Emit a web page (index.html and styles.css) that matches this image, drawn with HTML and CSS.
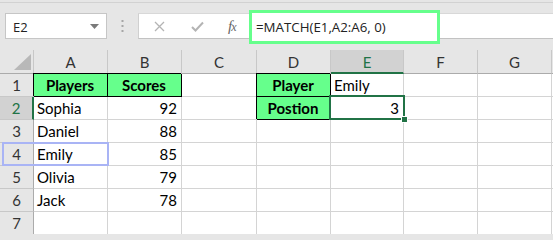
FILE: index.html
```html
<!DOCTYPE html>
<html>
<head>
<meta charset="utf-8">
<link rel="stylesheet" href="styles.css">
</head>
<body>
<div class="toolbar">
  <div class="namebox">
    <span class="nb-text">E2</span>
    <svg class="nb-arrow" width="9" height="5" viewBox="0 0 9 5"><path d="M0 0 H9 L4.5 5 Z" fill="#7a7a7a"/></svg>
  </div>
  <div class="dots">
    <svg width="3" height="12" viewBox="0 0 3 12"><rect x="0.5" y="0" width="2" height="2" fill="#a6a6a6"/><rect x="0.5" y="5" width="2" height="2" fill="#a6a6a6"/><rect x="0.5" y="10" width="2" height="2" fill="#a6a6a6"/></svg>
  </div>
  <div class="fbar">
    <div class="fbtns">
      <svg class="ic-x" width="11" height="11" viewBox="0 0 11 11"><path d="M1 1 L10 10 M10 1 L1 10" stroke="#b4b4b4" stroke-width="1.3"/></svg>
      <svg class="ic-ok" width="13" height="11" viewBox="0 0 13 11"><path d="M1 6 L4.5 9.5 L12 1.5" stroke="#b4b4b4" stroke-width="2" fill="none"/></svg>
      <span class="fx">f<span class="fx-x">x</span></span>
    </div>
    <div class="formula">=MATCH(E1,A2:A6, 0)</div>
  </div>
</div>

<div class="sheet">
  <div class="corner"><svg width="17" height="16" viewBox="0 0 17 16"><path d="M17 0 V16 H0 Z" fill="#b8b8b8"/></svg></div>
  <div class="ch">A</div>
  <div class="ch">B</div>
  <div class="ch">C</div>
  <div class="ch">D</div>
  <div class="ch ch-sel">E</div>
  <div class="ch">F</div>
  <div class="ch">G</div>
  <div class="ch ch-end"></div>

  <div class="rh">1</div>
  <div class="c hd">Players</div>
  <div class="c hd">Scores</div>
  <div class="c"></div>
  <div class="c hd">Player</div>
  <div class="c">Emily</div>
  <div class="c"></div>
  <div class="c"></div>
  <div class="c end"></div>

  <div class="rh rh-sel">2</div>
  <div class="c">Sophia</div>
  <div class="c num">92</div>
  <div class="c"></div>
  <div class="c hd">Postion</div>
  <div class="c num">3</div>
  <div class="c"></div>
  <div class="c"></div>
  <div class="c end"></div>

  <div class="rh">3</div>
  <div class="c">Daniel</div>
  <div class="c num">88</div>
  <div class="c"></div>
  <div class="c"></div>
  <div class="c"></div>
  <div class="c"></div>
  <div class="c"></div>
  <div class="c end"></div>

  <div class="rh">4</div>
  <div class="c">Emily</div>
  <div class="c num">85</div>
  <div class="c"></div>
  <div class="c"></div>
  <div class="c"></div>
  <div class="c"></div>
  <div class="c"></div>
  <div class="c end"></div>

  <div class="rh">5</div>
  <div class="c">Olivia</div>
  <div class="c num">79</div>
  <div class="c"></div>
  <div class="c"></div>
  <div class="c"></div>
  <div class="c"></div>
  <div class="c"></div>
  <div class="c end"></div>

  <div class="rh">6</div>
  <div class="c">Jack</div>
  <div class="c num">78</div>
  <div class="c"></div>
  <div class="c"></div>
  <div class="c"></div>
  <div class="c"></div>
  <div class="c"></div>
  <div class="c end"></div>

  <div class="rh">7</div>
  <div class="c"></div>
  <div class="c"></div>
  <div class="c"></div>
  <div class="c"></div>
  <div class="c"></div>
  <div class="c"></div>
  <div class="c"></div>
  <div class="c end"></div>

  <div class="rh rh-cut"></div>
  <div class="c cut"></div>
  <div class="c cut"></div>
  <div class="c cut"></div>
  <div class="c cut"></div>
  <div class="c cut"></div>
  <div class="c cut"></div>
  <div class="c cut"></div>
  <div class="c cut end"></div>

  <div class="hover-box"></div>
  <div class="sel-box"><div class="handle"></div></div>
</div>
</body>
</html>
```

FILE: styles.css
```css
* { box-sizing: border-box; }
html, body { margin: 0; padding: 0; }
body {
  width: 553px;
  height: 234px;
  overflow: hidden;
  background: #e6e6e6;
  font-family: Lato, "Open Sans", sans-serif;
}

.toolbar {
  position: relative;
  height: 48px;
  margin-top: 2px;
  border-top: 1px solid #d2d2d2;
  padding-top: 10px;
  display: flex;
  align-items: flex-start;
}

.namebox {
  margin-left: 5px;
  width: 102px;
  height: 26px;
  background: #fff;
  border: 1px solid #c6c6c6;
  display: flex;
  align-items: center;
  justify-content: space-between;
  padding: 0 7px 0 7px;
  font-family: "Open Sans", "Noto Sans", sans-serif;
  font-size: 13px;
  color: #222;
}
.nb-text { padding-top: 1px; }
.nb-arrow { margin-top: 1px; }

.dots {
  width: 31px;
  height: 26px;
  display: flex;
  align-items: center;
  justify-content: center;
}

.fbar {
  position: relative;
  flex: 1;
  height: 26px;
  background: #fff;
  border-top: 1px solid #d8d8d8;
  border-bottom: 1px solid #c2c2c2;
  border-left: 1px solid #d0d0d0;
  display: flex;
  align-items: center;
}

.fbtns {
  width: 111px;
  height: 100%;
  display: flex;
  align-items: center;
  padding-left: 15px;
}
.ic-x { margin-right: 26px; }
.ic-ok { margin-right: 24px; }
.fx {
  font-family: "Liberation Serif", "DejaVu Serif", serif;
  font-style: italic;
  font-size: 15px;
  color: #666;
  letter-spacing: -1px;
}
.fx-x { font-size: 12px; }

.formula {
  position: absolute;
  left: 110px;
  top: -4px;
  width: 191px;
  height: 34px;
  border: 3px solid #66ff8c;
  background: #fff;
  display: flex;
  align-items: center;
  padding-left: 4px;
  font-family: "Open Sans", "Noto Sans", sans-serif;
  font-size: 13.3px;
  color: #222;
}

.sheet {
  position: relative;
  display: grid;
  grid-template-columns: 34px 74px 74px 75px 74px 73px 74px 74px 2px;
  grid-template-rows: 24px repeat(7, 23px) 2px;
  background: #fff;
}

.corner {
  background: #e6e6e6;
  border-right: 1px solid #c8c8c8;
  border-bottom: 1px solid #ababab;
  display: flex;
  align-items: flex-end;
  justify-content: flex-end;
  padding: 0 2px 3px 0;
}

.ch {
  background: #e6e6e6;
  border-right: 1px solid #c8c8c8;
  border-bottom: 1px solid #ababab;
  display: flex;
  align-items: center;
  justify-content: center;
  font-size: 15px;
  color: #333;
  padding-top: 1px;
}
.ch-end { border-right: none; }
.ch-sel {
  background: #d2d2d2;
  color: #217346;
  border-bottom: 2px solid #217346;
}

.rh {
  background: #e6e6e6;
  border-right: 1px solid #ababab;
  border-bottom: 1px solid #c8c8c8;
  display: flex;
  align-items: center;
  justify-content: center;
  font-size: 15px;
  color: #333;
}
.rh-sel {
  background: #d2d2d2;
  color: #217346;
  border-right: 2px solid #217346;
}
.rh-cut { border-bottom: none; }

.c {
  border-right: 1px solid #d4d4d4;
  border-bottom: 1px solid #d4d4d4;
  display: flex;
  align-items: center;
  padding: 0 4px 0 3px;
  font-size: 15px;
  color: #000;
  white-space: nowrap;
}
.c.end { border-right: none; }
.c.cut { border-bottom: none; }
.num { justify-content: flex-end; }

.hd {
  background: #66ff8c;
  font-weight: bold;
  justify-content: center;
  border-right-color: #000;
  border-bottom-color: #000;
  box-shadow: -1px -1px 0 0 #000;
}

.hover-box {
  position: absolute;
  left: 2px;
  top: 92px;
  width: 107px;
  height: 24px;
  border: 2px solid #a9b4f5;
  pointer-events: none;
}

.sel-box {
  position: absolute;
  left: 329px;
  top: 45px;
  width: 76px;
  height: 25px;
  border: 2px solid #217346;
  pointer-events: none;
}
.handle {
  position: absolute;
  right: -5px;
  bottom: -5px;
  width: 7px;
  height: 7px;
  background: #217346;
  border: 1px solid #fff;
}
```
